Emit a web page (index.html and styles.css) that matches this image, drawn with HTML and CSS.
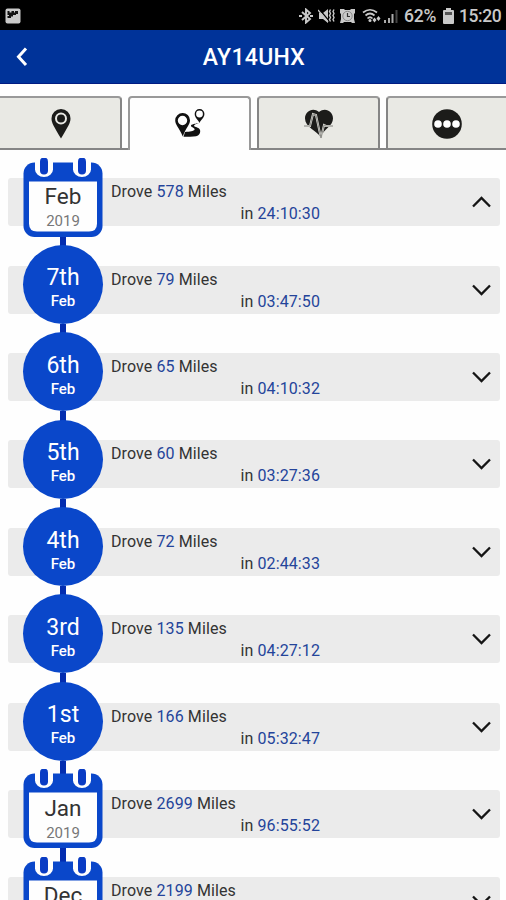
FILE: index.html
```html
<!DOCTYPE html>
<html lang="en">
<head>
<meta charset="utf-8">
<title>AY14UHX</title>
<link rel="stylesheet" href="styles.css">
</head>
<body>
<div class="status">
  <svg class="shot" width="16" height="16" viewBox="0 0 16 16"><rect x=".5" y=".5" width="15" height="15" rx="2" fill="#c9c9c9"/><path d="M2.500 3h2v1.500h2V3H9v1.500h1V3h3v3h-2v1H8v1.500H6V10H2.500V8H4V7H2.500z" fill="#111"/></svg>
  <div class="tray">
    <svg width="14" height="16" viewBox="0 0 14 16"><path d="M3 4l8 7-4 3.500V1.500L11 5l-8 7M0 8h3M11 8h3" fill="none" stroke="#c9c9c9" stroke-width="1.900"/></svg>
    <svg class="mute" width="17" height="16" viewBox="0 0 17 16"><path d="M1 5h4l5-4v14l-5-4H1z" fill="#c9c9c9"/><path d="M1 1l11 13" stroke="#000" stroke-width="1.200"/><path d="M0 2l10 12" stroke="#c9c9c9" stroke-width="1.300"/><path d="M12.500 1.500l-1 2 1 2-1 2 1 2-1 2 1 2M16 1.500l-1 2 1 2-1 2 1 2-1 2 1 2" fill="none" stroke="#c9c9c9" stroke-width="1.400"/></svg>
    <svg class="alarm" width="15" height="16" viewBox="0 0 15 16"><path d="M0 1h4l1 1h5l1-1h4v4l-1 1v5l1 4h-3l-1-1H4l-1 1H0l1-4V6L0 5z" fill="#c9c9c9"/><circle cx="7.500" cy="8" r="4.700" fill="none" stroke="#888"/><path d="M7.500 5v3.500H10" fill="none" stroke="#333" stroke-width="1.200"/></svg>
    <svg class="wifi" width="19" height="16" viewBox="0 0 19 16"><g fill="none" stroke="#c9c9c9" stroke-width="1.700"><path d="M1 4.500Q8-1 15 4.500M3.500 7.500q4.500-4 9 0M5.500 10.500q2.500-2.500 5 0"/></g><circle cx="8" cy="12.500" r="1.500" fill="#c9c9c9"/><path d="M10.500 12l2-2.500 2 2.500-2 2.500zM14.500 10.500l2-2.500 2 2.500-2 2.500z" fill="#c9c9c9"/></svg>
    <svg class="signal" width="15" height="14" viewBox="0 0 15 14"><path d="M0 11h2v3H0zM4 9h2v5H4zM7.500 5h2v9h-2z" fill="#aaa"/><path d="M11.500 1h2v13h-2z" fill="#444"/></svg>
    <span class="pct">62%</span>
    <svg class="battery" width="11" height="16" viewBox="0 0 11 16"><path d="M3 0h5v2h2q1 0 1 1v12q0 1-1 1H1q-1 0-1-1V3q0-1 1-1h2z" fill="#c9c9c9"/><path d="M2 4h7v3H2z" fill="#555"/></svg>
    <span class="clock">15:20</span>
  </div>
</div>
<header class="bar">
  <svg class="back" width="12" height="20" viewBox="0 0 12 20"><path d="M10 1.500L2.500 9.800 10 18" fill="none" stroke="#fff" stroke-width="3"/></svg>
  <h1>AY14UHX</h1>
</header>
<nav class="tabs">
  <div class="tab first"><svg width="20" height="30" viewBox="0 0 20 30"><path d="M10 0A9.500 9.500 0 0 0 .5 9.500C.5 14 3 17.500 10 29.500 17 17.500 19.500 14 19.500 9.500A9.500 9.500 0 0 0 10 0z" fill="#1c1c1a"/><circle cx="10" cy="9.500" r="5" fill="none" stroke="#e9e9e4" stroke-width="2"/></svg></div>
  <div class="tab active"><svg width="30" height="30" viewBox="0 0 30 30"><path fill-rule="evenodd" d="M7.500 4A7.300 7.300 0 0 0 .2 11.300C.2 16 4 18.500 7.800 27.500 11 18.500 15 16 15 11.300A7.300 7.300 0 0 0 7.500 4zm0 2.800a4.700 4.700 0 1 1 0 9.400 4.700 4.700 0 0 1 0-9.400zM24.500 0A4.800 4.800 0 0 0 19.700 4.900c0 4 3.500 5.500 4.800 9.100 1.300-3.600 4.900-5.100 4.900-9.100A4.800 4.800 0 0 0 24.500 0zm0 1.600a3.400 3.400 0 1 1 0 6.800 3.400 3.400 0 0 1 0-6.800z" fill="#111"/><path d="M24 14c-3 .5-8.500 1.200-8 3 .3 1.300 4.500 2.200 3.500 3.800-.8 1.200-4.500 2-9.500 2.200l-1.500 4.800c5 .2 12 0 14.500-1.300 2.500-1.500 3-5.500 1-7-1.500-1.200-5-1.700-5-2.700s2.500-1.300 2-2.800z" fill="#111"/></svg></div>
  <div class="tab"><svg width="30" height="31" viewBox="0 0 30 31"><path d="M16.500 28C13 22 1 18 1 9.500 1 2 9-2 15 3c6-5 14-1 14 6.500C29 17 20 20 16.500 28z" fill="#1c1c1a"/><path d="M0 17h6l3-12 3 1 3 14 2 9 3-13 2 1h7" fill="none" stroke="#deded8" stroke-width="2"/><path d="M0 17h6l3-12 3 1 3 14 2 9 3-13 2 1h7" fill="none" stroke="#8a8a86" stroke-width="1"/></svg></div>
  <div class="tab last"><svg width="30" height="30" viewBox="0 0 30 30"><circle cx="15" cy="15" r="14.800" fill="#1c1c1a"/><g fill="#fff"><circle cx="6" cy="15" r="3.800"/><circle cx="15" cy="15" r="3.800"/><circle cx="24" cy="15" r="3.800"/></g></svg></div>
</nav>
<main class="timeline" id="timeline"></main>
<script src="script.js"></script>
</body>
</html>
```
FILE: styles.css
```css
* { box-sizing: border-box; }
html, body { height: 100%; }
body {
  margin: 0;
  height: 900px;
  display: flex;
  flex-direction: column;
  overflow: hidden;
  background: #fefefe;
  font-family: Roboto, sans-serif;
  color: #333;
}
svg { display: block; flex: none; }

.status {
  flex: none;
  height: 30px;
  padding: 2px 5px 0 5px;
  display: flex;
  align-items: center;
  justify-content: space-between;
  background: #000;
  color: #c9c9c9;
}
.tray { display: flex; align-items: center; }
.mute { margin-left: 5px; }
.alarm { margin-left: 5px; }
.wifi { margin-left: 7px; }
.signal { margin-left: 3px; }
.pct, .clock { font-size: 17.500px; line-height: 20px; font-weight: 500; white-space: nowrap; }
.pct { margin-left: 5px; width: 34px; letter-spacing: -0.2px; }
.battery { margin-left: 5px; }
.clock { margin-left: 5px; width: 42px; letter-spacing: -0.4px; }

.bar {
  flex: none;
  height: 54px;
  display: grid;
  grid-template-columns: 40px 1fr 40px;
  align-items: center;
  background: #003399;
  border-bottom: 1px solid #001b82;
  color: #fff;
}
.back { margin-left: 16px; }
.bar h1 {
  margin: 0;
  padding: 2px 0 0 2px;
  text-align: center;
  font-size: 23px;
  line-height: 30px;
  font-weight: 500;
  letter-spacing: 0.3px;
}

.tabs {
  flex: none;
  height: 66px;
  padding-top: 12px;
  display: grid;
  grid-template-columns: 122px 123px 123px 126px;
  column-gap: 6px;
  background: linear-gradient(#858585, #858585) bottom / 100% 2px no-repeat;
}
.tab {
  display: flex;
  justify-content: center;
  padding-top: 11px;
  margin-bottom: 2px;
  background: #e9e9e4;
  border: 2px solid #858585;
  border-top-color: #999;
  border-bottom: 0;
  border-radius: 4px 4px 0 0;
}
.tab.first { border-left: 0; border-top-left-radius: 0; padding-left: 1px; }
.tab.active { margin-bottom: 0; background: #fefefe; border-color: #999; }
.tab.last { padding-right: 4px; }

.timeline {
  flex: 1;
  min-height: 0;
  overflow: hidden;
  padding: 7.500px 6px 0 8px;
}
.row {
  height: 87.400px;
  display: grid;
  grid-template-columns: 15px 80px 1fr;
  grid-template-rows: 87.400px;
}
.card {
  grid-area: 1 / 1 / 2 / 4;
  height: 48px;
  margin-top: 20.800px;
  padding: 3px 9px 0 103px;
  display: grid;
  grid-template-columns: 209px 1fr;
  background: #ebebeb;
  border-radius: 3px;
  font-size: 16px;
  line-height: 22px;
  letter-spacing: 0.1px;
}
.card p { margin: 0; white-space: nowrap; }
.card .time { text-align: right; }
.card b { font-weight: 400; color: #24449a; }
.chev { justify-self: end; margin-top: 15px; }
.marker {
  grid-area: 1 / 2 / 2 / 3;
  display: flex;
  flex-direction: column;
  align-items: center;
  z-index: 1;
}
.marker::after {
  content: "";
  flex: none;
  width: 6px;
  height: 15px;
  background: #032db0;
}
.day, .month {
  flex: none;
  width: 80px;
  height: 79px;
}
.day {
  display: flex;
  flex-direction: column;
  align-items: center;
  border-radius: 50%;
  background: #0a47ca;
  color: #fff;
  padding-top: 19.500px;
}
.day strong { font-size: 23px; line-height: 28px; font-weight: 400; }
.day span { font-size: 15px; line-height: 18px; font-weight: 500; }
.month { display: grid; justify-items: center; }
.month svg, .label { grid-area: 1 / 1; }
.label { padding-top: 24.500px; display: flex; flex-direction: column; align-items: center; }
.label strong { font-size: 22.500px; line-height: 28px; font-weight: 400; }
.label span { margin-top: 2px; font-size: 15px; line-height: 18px; color: #777; }
```
FILE: script.js
```js
const entries = [
  ["month", "Feb", "2019", 578, "24:10:30", true],
  ["day", "7th", "Feb", 79, "03:47:50"],
  ["day", "6th", "Feb", 65, "04:10:32"],
  ["day", "5th", "Feb", 60, "03:27:36"],
  ["day", "4th", "Feb", 72, "02:44:33"],
  ["day", "3rd", "Feb", 135, "04:27:12"],
  ["day", "1st", "Feb", 166, "05:32:47"],
  ["month", "Jan", "2019", 2699, "96:55:52"],
  ["month", "Dec", "", 2199, ""]
];

const calendar = `<svg width="80" height="80" viewBox="0 0 80 80">
  <rect x=".5" y="4.500" width="79" height="74.500" rx="11" fill="#0a47ca"/>
  <path d="M6 23.500h68v42q0 8-8 8H14q-8 0-8-8z" fill="#fefefe"/>
  <path d="M12 4v7.500a9 7.500 0 0 0 18 0V4zM50 4v7.500a9 7.500 0 0 0 18 0V4z" fill="#fefefe"/>
  <rect x="17" y="-.5" width="8" height="17" rx="4" fill="#0a3cc4"/>
  <rect x="55" y="-.5" width="8" height="17" rx="4" fill="#0a3cc4"/>
</svg>`;

function marker(kind, top, bottom) {
  const text = `<strong>${top}</strong><span>${bottom}</span>`;
  return kind === "day"
    ? `<div class="day">${text}</div>`
    : `<div class="month">${calendar}<div class="label">${text}</div></div>`;
}

document.getElementById("timeline").innerHTML = entries.map(([kind, top, bottom, miles, time, open]) => `
  <section class="row">
    <div class="card">
      <div><p>Drove <b>${miles}</b> Miles</p>${time ? `<p class="time">in <b>${time}</b></p>` : ""}</div>
      <svg class="chev" width="19" height="12" viewBox="0 0 19 12"><path d="${open ? "M1 10.500l8.500-8.500 8.500 8.500" : "M1 1.500L9.500 10 18 1.500"}" fill="none" stroke="#151515" stroke-width="2.300"/></svg>
    </div>
    <div class="marker">${marker(kind, top, bottom)}</div>
  </section>`).join("");
```
